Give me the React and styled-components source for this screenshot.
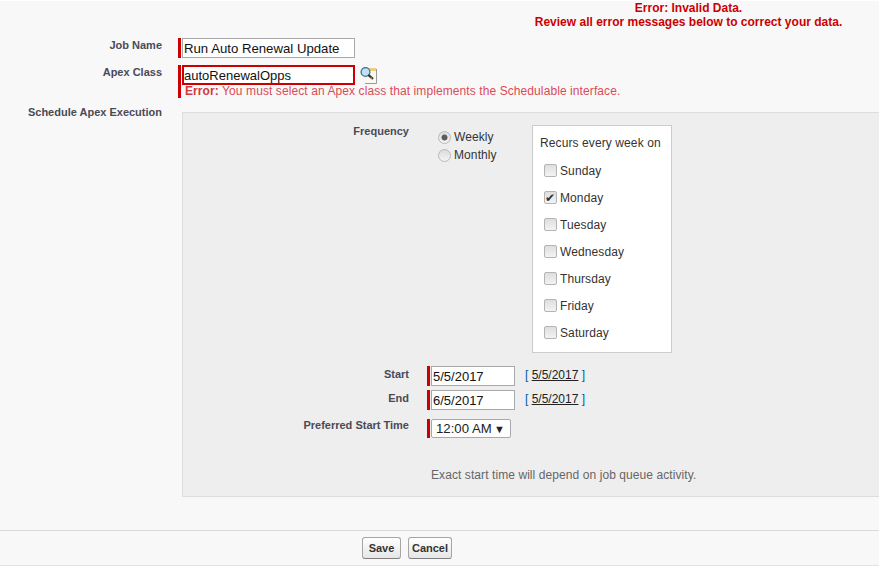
import styled, { createGlobalStyle } from "styled-components";

const GlobalStyle = createGlobalStyle`
  html, body { margin: 0; padding: 0; background: #fff; }
  body { font-family: "Liberation Sans", Arial, sans-serif; }
`;

const Page = styled.div`
  width: 879px;
  height: 565px;
  margin-top: 1px;
  background: #f8f8f8;
  border-bottom: 1px solid #e2e2e2;
  box-sizing: border-box;
  display: flex;
  flex-direction: column;
  overflow: hidden;
`;

const Messages = styled.div`
  height: 37px;
  padding-left: 498px;
  box-sizing: border-box;
  text-align: center;
  color: #cc0000;
  font-size: 12px;
  font-weight: bold;
  line-height: 14px;
`;

const FormRow = styled.div`
  display: grid;
  grid-template-columns: 162px 1fr;
  column-gap: 16px;
  margin-bottom: ${({ $gap }) => $gap || 0}px;
`;

const Label = styled.div`
  text-align: right;
  color: #4a4a56;
  font-size: 11px;
  font-weight: bold;
  line-height: 13px;
  padding-top: ${({ $top }) => $top || 0}px;
`;

const Required = styled.div`
  border-left: 3px solid #c00;
  padding-left: 1px;
  display: ${({ $block }) => ($block ? "block" : "flex")};
`;

const PanelRequired = styled(Required)`
  margin-left: 18px;
  height: ${({ $height }) => $height}px;
`;

const Input = styled.input`
  width: ${({ $width }) => $width}px;
  height: 20px;
  box-sizing: border-box;
  margin: 0;
  padding: ${({ $error }) => ($error ? "0" : "0 1px")};
  background: #fff;
  border: ${({ $error }) => ($error ? "2px solid #c00" : "1px solid #a9a9a9")};
  font-family: "Liberation Sans", Arial, sans-serif;
  font-size: ${({ $size }) => $size || 13.2}px;
  color: #111;
  outline: none;
`;

const InlineField = styled.div`
  display: flex;
  align-items: center;
  gap: 5px;
`;

const ErrorText = styled.div`
  font-size: 12px;
  line-height: 13px;
  letter-spacing: 0.09px;
  color: #dc4a57;
  padding: 0 0 0 3px;
  & > b { color: #cf3a40; }
`;

const Panel = styled.div`
  margin: 7px 0 0 4px;
  background: #eeeeee;
  border: 1px solid #dddddd;
  border-right: 0;
  height: 385px;
  box-sizing: border-box;
  padding-top: 12px;
`;

const FrequencyRow = styled.div`
  display: flex;
  height: 241px;
`;

const PanelLabel = styled(Label)`
  width: 226px;
  flex: none;
`;

const RadioList = styled.div`
  margin-left: 29px;
  width: 94px;
  padding-top: 3px;
  flex: none;
`;

const RadioLine = styled.label`
  display: flex;
  align-items: center;
  gap: 3px;
  height: 18px;
  font-size: 12px;
  letter-spacing: 0.1px;
  color: #333;
`;

const Radio = styled.input`
  appearance: none;
  margin: 0;
  width: 13px;
  height: 13px;
  border-radius: 50%;
  border: 1px solid #b9b9b9;
  background: radial-gradient(circle, #5c5c5c 0 2.6px, transparent 3.4px), linear-gradient(#dcdcdc, #f4f4f4);
  background-size: ${({ checked }) => (checked ? "auto, auto" : "0 0, auto")};
  background-repeat: no-repeat;
`;

const RecursBox = styled.div`
  width: 140px;
  height: 228px;
  box-sizing: border-box;
  background: #fff;
  border: 1px solid #cccccc;
  padding: 10px 0 0 7px;
`;

const RecursTitle = styled.div`
  font-size: 12px;
  line-height: 14px;
  letter-spacing: 0.1px;
  color: #333;
  margin-bottom: 7px;
`;

const DayLine = styled.label`
  display: flex;
  align-items: center;
  gap: 3px;
  height: 27px;
  padding-left: 4px;
  font-size: 12px;
  letter-spacing: 0.1px;
  color: #333;
`;

const DayBox = styled.input`
  appearance: none;
  position: relative;
  margin: 0;
  width: 13px;
  height: 13px;
  border-radius: 2px;
  border: 1px solid #b4b4b4;
  background: linear-gradient(#dedede, #f3f3f3);
  &:checked::after {
    content: "✔";
    position: absolute;
    left: 0;
    top: -1px;
    font-size: 12px;
    line-height: 14px;
    color: #333;
  }
`;

const DateRow = styled.div`
  display: flex;
  height: 24px;
`;

const DateLink = styled.span`
  margin-left: 10px;
  font-size: 12px;
  line-height: 18px;
  color: #015ba7;
  & > a { color: #222; text-decoration: underline; }
`;

const TimeRow = styled.div`
  display: flex;
  height: 19px;
  margin-top: 5px;
`;

const TimeSelect = styled.div`
  width: 80px;
  height: 19px;
  box-sizing: border-box;
  background: #fff;
  border: 1px solid #a9a9a9;
  border-radius: 2px;
  display: flex;
  align-items: center;
  justify-content: space-between;
  padding: 0 5px 0 4px;
  font-size: 13.2px;
  white-space: nowrap;
  color: #222;
  & > i { font-style: normal; font-size: 11px; }
`;

const Note = styled.div`
  margin: 30px 0 0 248px;
  font-size: 12px;
  line-height: 14px;
  letter-spacing: 0.08px;
  color: #666;
`;

const Footer = styled.div`
  margin-top: 33px;
  border-top: 1px solid #dbdbdb;
  padding: 6px 0 0 362px;
  display: flex;
  gap: 7px;
`;

const Button = styled.button`
  width: ${({ $width }) => $width}px;
  height: 22px;
  padding: 0;
  box-sizing: border-box;
  border: 1px solid #a5a5a5;
  border-bottom-color: #7f7f7f;
  border-radius: 3px;
  background: linear-gradient(#ffffff, #f0f0f0 60%, #e6e6e6);
  color: #333;
  font-family: "Liberation Sans", Arial, sans-serif;
  font-size: 11px;
  font-weight: bold;
`;

function Magnifier() {
  return (
    <svg width="17" height="17" viewBox="0 0 17 17">
      <path d="M4 1h12v15H4z" fill="#fbfaf2" />
      <path d="M8 1h8v3H8z" fill="#f2cf73" />
      <path d="M16.5 2v14.5H5" fill="none" stroke="#9a9a9a" />
      <circle cx="5.5" cy="5" r="4.4" fill="#bfe0f5" stroke="#3f6f8f" strokeWidth="1.3" />
      <path d="M8.8 8.4l3.6 3" stroke="#333" strokeWidth="2.2" strokeLinecap="round" />
      <path d="M10.6 10.5l1.4 1.1" stroke="#c47a2c" strokeWidth="1.4" />
    </svg>
  );
}

const days = ["Sunday", "Monday", "Tuesday", "Wednesday", "Thursday", "Friday", "Saturday"];

export default function App() {
  return (
    <Page>
      <GlobalStyle />
      <Messages>
        Error: Invalid Data.
        <br />
        Review all error messages below to correct your data.
      </Messages>

      <FormRow $gap={7}>
        <Label $top={1}>Job Name</Label>
        <Required>
          <Input $width={173} defaultValue="Run Auto Renewal Update" readOnly />
        </Required>
      </FormRow>

      <FormRow $gap={7}>
        <Label $top={1}>Apex Class</Label>
        <Required $block>
          <InlineField>
            <Input $width={173} $size={13} $error defaultValue="autoRenewalOpps" readOnly />
            <Magnifier />
          </InlineField>
          <ErrorText>
            <b>Error:</b> You must select an Apex class that implements the Schedulable interface.
          </ErrorText>
        </Required>
      </FormRow>

      <FormRow>
        <Label $top={1}>Schedule Apex Execution</Label>
        <Panel>
          <FrequencyRow>
            <PanelLabel>Frequency</PanelLabel>
            <RadioList>
              <RadioLine>
                <Radio type="radio" checked readOnly /> Weekly
              </RadioLine>
              <RadioLine>
                <Radio type="radio" checked={false} readOnly /> Monthly
              </RadioLine>
            </RadioList>
            <RecursBox>
              <RecursTitle>Recurs every week on</RecursTitle>
              {days.map((day) => (
                <DayLine key={day}>
                  <DayBox type="checkbox" checked={day === "Monday"} readOnly /> {day}
                </DayLine>
              ))}
            </RecursBox>
          </FrequencyRow>

          <DateRow>
            <PanelLabel $top={2}>Start</PanelLabel>
            <PanelRequired $height={20}>
              <Input $width={84} $size={13} defaultValue="5/5/2017" readOnly />
            </PanelRequired>
            <DateLink>
              [ <a>5/5/2017</a> ]
            </DateLink>
          </DateRow>
          <DateRow>
            <PanelLabel $top={2}>End</PanelLabel>
            <PanelRequired $height={20}>
              <Input $width={84} $size={13} defaultValue="6/5/2017" readOnly />
            </PanelRequired>
            <DateLink>
              [ <a>5/5/2017</a> ]
            </DateLink>
          </DateRow>
          <TimeRow>
            <PanelLabel>Preferred Start Time</PanelLabel>
            <PanelRequired $height={19}>
              <TimeSelect>
                12:00 AM <i>▼</i>
              </TimeSelect>
            </PanelRequired>
          </TimeRow>

          <Note>Exact start time will depend on job queue activity.</Note>
        </Panel>
      </FormRow>

      <Footer>
        <Button $width={39}>Save</Button>
        <Button $width={44}>Cancel</Button>
      </Footer>
    </Page>
  );
}
